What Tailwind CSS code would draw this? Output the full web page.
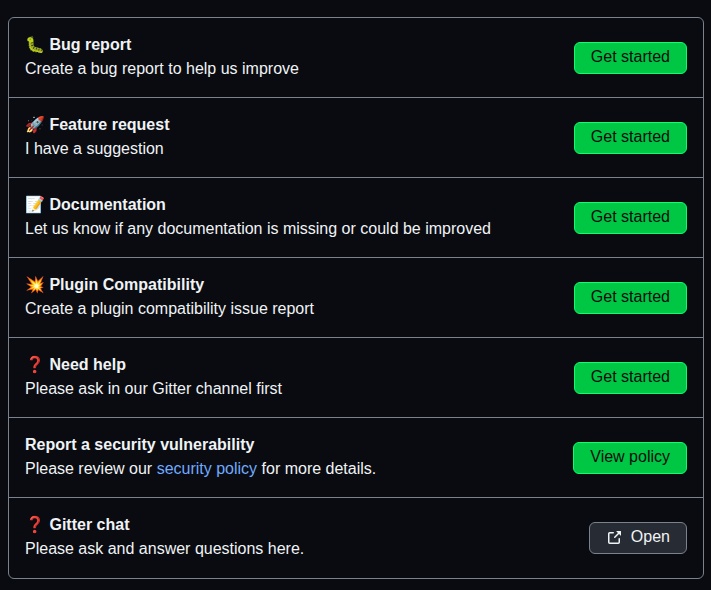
<!DOCTYPE html>
<html lang="en"><head><meta charset="utf-8"><title>Choose an issue template</title>
<script src="https://cdn.jsdelivr.net/npm/@tailwindcss/browser@4"></script></head>
<body class="bg-[#090b10] text-[#f0f3f6] font-['Liberation_Sans',Arial,sans-serif] text-[16px] leading-[24px] pt-[17px] pl-2 pr-[7px] h-[590px] overflow-hidden">
<main class="border border-[#7a828e] rounded-md divide-y divide-[#7a828e]">
<section class="flex items-start justify-between h-20 px-4"><div class="pt-[15px]"><h3 class="font-bold">🐛 Bug report</h3><p>Create a bug report to help us improve</p></div><a class="mt-6 h-8 px-4 rounded-md border border-[#0aff70] bg-[#00c743] text-[#0a0c10] leading-[28px]">Get started</a></section>
<section class="flex items-start justify-between h-20 px-4"><div class="pt-[15px]"><h3 class="font-bold">🚀 Feature request</h3><p>I have a suggestion</p></div><a class="mt-6 h-8 px-4 rounded-md border border-[#0aff70] bg-[#00c743] text-[#0a0c10] leading-[28px]">Get started</a></section>
<section class="flex items-start justify-between h-20 px-4"><div class="pt-[15px]"><h3 class="font-bold">📝 Documentation</h3><p>Let us know if any documentation is missing or could be improved</p></div><a class="mt-6 h-8 px-4 rounded-md border border-[#0aff70] bg-[#00c743] text-[#0a0c10] leading-[28px]">Get started</a></section>
<section class="flex items-start justify-between h-20 px-4"><div class="pt-[15px]"><h3 class="font-bold">💥 Plugin Compatibility</h3><p>Create a plugin compatibility issue report</p></div><a class="mt-6 h-8 px-4 rounded-md border border-[#0aff70] bg-[#00c743] text-[#0a0c10] leading-[28px]">Get started</a></section>
<section class="flex items-start justify-between h-20 px-4"><div class="pt-[15px]"><h3 class="font-bold">❓ Need help</h3><p>Please ask in our Gitter channel first</p></div><a class="mt-6 h-8 px-4 rounded-md border border-[#0aff70] bg-[#00c743] text-[#0a0c10] leading-[28px]">Get started</a></section>
<section class="flex items-start justify-between h-20 px-4"><div class="pt-[15px]"><h3 class="font-bold">Report a security vulnerability</h3><p>Please review our <a class="text-[#70aaff]">security policy</a> for more details.</p></div><a class="mt-6 h-8 px-4 rounded-md border border-[#0aff70] bg-[#00c743] text-[#0a0c10] leading-[28px]">View policy</a></section>
<section class="flex items-start justify-between h-20 px-4"><div class="pt-[15px]"><h3 class="font-bold">❓ Gitter chat</h3><p>Please ask and answer questions here.</p></div><a class="mt-6 h-8 px-4 rounded-md border border-[#7a828e] bg-[#272b33] leading-[28px] flex gap-[9px]"><svg class="size-4 mt-[7px]" viewBox="0 0 16 16" fill="currentColor"><path d="M3.75 2h3.5a.75.75 0 0 1 0 1.5h-3.5a.25.25 0 0 0-.25.25v8.5c0 .138.112.25.25.25h8.5a.25.25 0 0 0 .25-.25v-3.5a.75.75 0 0 1 1.5 0v3.5A1.75 1.75 0 0 1 12.25 14h-8.5A1.75 1.75 0 0 1 2 12.25v-8.5C2 2.784 2.784 2 3.75 2Zm6.854-1h4.146a.25.25 0 0 1 .25.25v4.146a.25.25 0 0 1-.427.177L13.03 4.03 9.28 7.78a.751.751 0 0 1-1.042-.018.751.751 0 0 1-.018-1.042l3.75-3.75-1.543-1.543A.25.25 0 0 1 10.604 1Z"/></svg>Open</a></section>
</main></body></html>
